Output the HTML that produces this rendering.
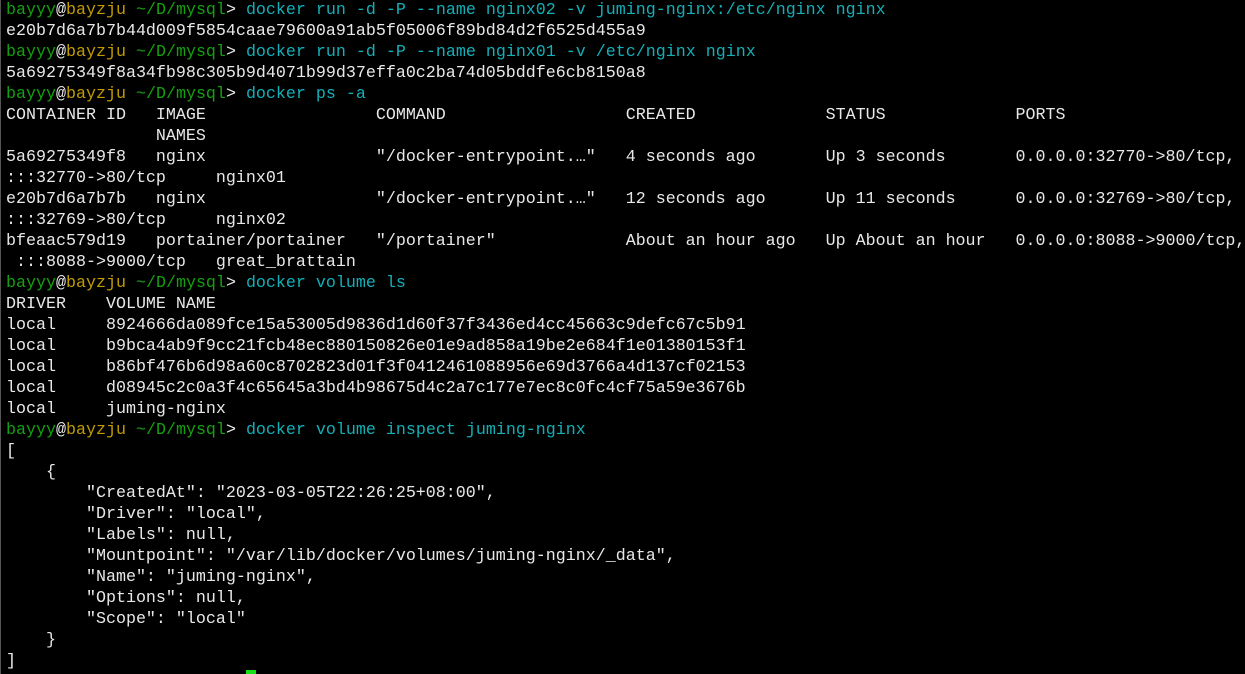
<!DOCTYPE html>
<html><head><meta charset="utf-8"><style>
html,body{margin:0;padding:0;background:#000;width:1245px;height:674px;overflow:hidden}
pre{margin:0;padding:0 0 0 5px;font-family:"Liberation Mono",monospace;font-size:16.67px;line-height:21px;color:#e8e8e8;border-left:1px solid #555;height:674px;box-sizing:border-box}
.g{color:#13a10e}.y{color:#c19c00}.c{color:#12b0b8}
.cur{position:absolute;left:246px;top:670px;width:10px;height:4px;background:#16e016}
</style></head><body><pre><span class="g">bayyy</span>@<span class="y">bayzju</span> <span class="g">~/D/mysql</span>&gt; <span class="c">docker run -d -P --name nginx02 -v juming-nginx:/etc/nginx nginx</span>
e20b7d6a7b7b44d009f5854caae79600a91ab5f05006f89bd84d2f6525d455a9
<span class="g">bayyy</span>@<span class="y">bayzju</span> <span class="g">~/D/mysql</span>&gt; <span class="c">docker run -d -P --name nginx01 -v /etc/nginx nginx</span>
5a69275349f8a34fb98c305b9d4071b99d37effa0c2ba74d05bddfe6cb8150a8
<span class="g">bayyy</span>@<span class="y">bayzju</span> <span class="g">~/D/mysql</span>&gt; <span class="c">docker ps -a</span>
CONTAINER ID   IMAGE                 COMMAND                  CREATED             STATUS             PORTS
               NAMES
5a69275349f8   nginx                 "/docker-entrypoint.…"   4 seconds ago       Up 3 seconds       0.0.0.0:32770-&gt;80/tcp,
:::32770-&gt;80/tcp     nginx01
e20b7d6a7b7b   nginx                 "/docker-entrypoint.…"   12 seconds ago      Up 11 seconds      0.0.0.0:32769-&gt;80/tcp,
:::32769-&gt;80/tcp     nginx02
bfeaac579d19   portainer/portainer   "/portainer"             About an hour ago   Up About an hour   0.0.0.0:8088-&gt;9000/tcp,
 :::8088-&gt;9000/tcp   great_brattain
<span class="g">bayyy</span>@<span class="y">bayzju</span> <span class="g">~/D/mysql</span>&gt; <span class="c">docker volume ls</span>
DRIVER    VOLUME NAME
local     8924666da089fce15a53005d9836d1d60f37f3436ed4cc45663c9defc67c5b91
local     b9bca4ab9f9cc21fcb48ec880150826e01e9ad858a19be2e684f1e01380153f1
local     b86bf476b6d98a60c8702823d01f3f0412461088956e69d3766a4d137cf02153
local     d08945c2c0a3f4c65645a3bd4b98675d4c2a7c177e7ec8c0fc4cf75a59e3676b
local     juming-nginx
<span class="g">bayyy</span>@<span class="y">bayzju</span> <span class="g">~/D/mysql</span>&gt; <span class="c">docker volume inspect juming-nginx</span>
[
    {
        "CreatedAt": "2023-03-05T22:26:25+08:00",
        "Driver": "local",
        "Labels": null,
        "Mountpoint": "/var/lib/docker/volumes/juming-nginx/_data",
        "Name": "juming-nginx",
        "Options": null,
        "Scope": "local"
    }
]</pre><div class="cur"></div></body></html>
